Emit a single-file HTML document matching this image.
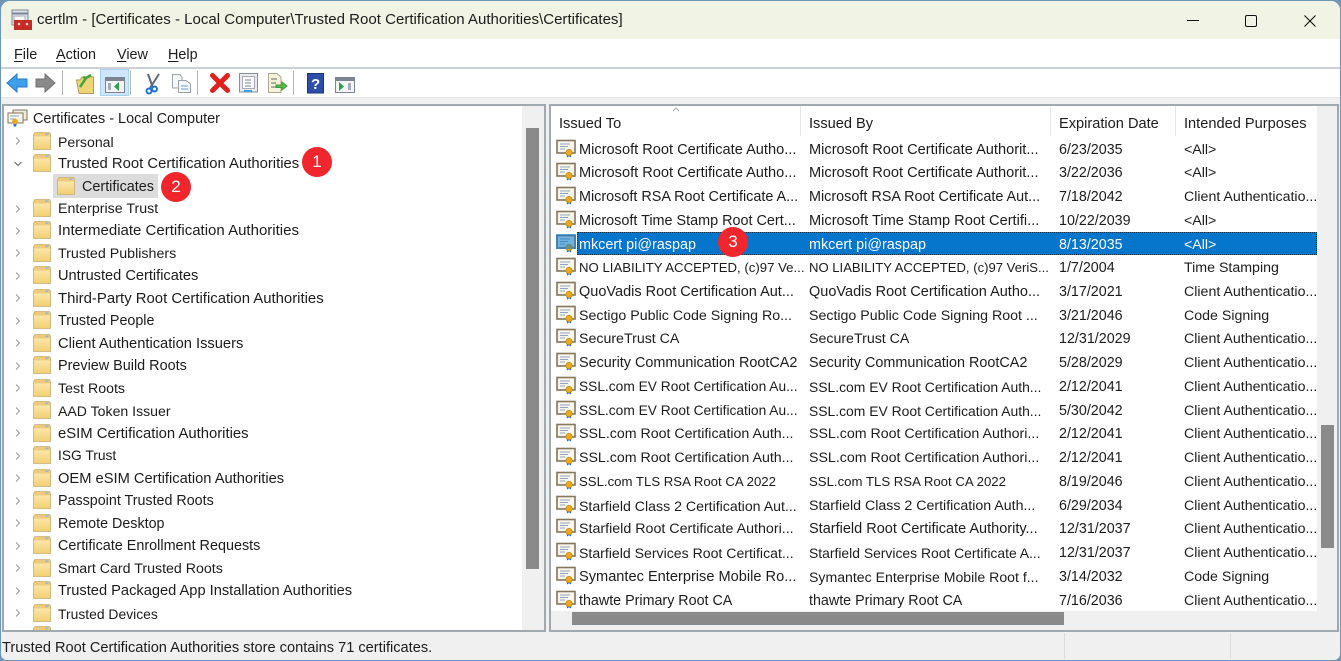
<!DOCTYPE html>
<html><head><meta charset="utf-8"><style>
html,body{margin:0;padding:0;width:1341px;height:661px;overflow:hidden;background:#6f96b8}
*{box-sizing:border-box}
#w{position:absolute;left:1px;top:1px;width:1339px;height:659px;background:#f0f0f0;border-radius:9px 9px 6px 6px;overflow:hidden;}
.a{position:absolute}
.x{position:absolute;white-space:nowrap;font:14.6px/20px "Liberation Sans",sans-serif;color:#1c1c1c}
.t{position:absolute;left:0;width:520px;height:22px}
.t .x{left:54px;top:1px}
.t svg.f{position:absolute;left:27.500px;top:0}
.t svg.c{position:absolute;left:9px;top:5.500px}
.r{position:absolute;left:0;width:768px;height:23px}
.r .x{top:1px}
.r svg{position:absolute;left:5px;top:0}
.r .x:nth-of-type(1){left:28px}.r .x:nth-of-type(2){left:258px}.r .x:nth-of-type(3){left:508px;font-size:14.3px}.r .x:nth-of-type(4){left:633px;font-size:14.2px;width:133px;overflow:hidden}
.b{position:absolute;border-radius:50%;background:#f0262c;color:#fff;font:17px/30px "Liberation Sans",sans-serif;text-align:center;width:30px;height:30px}
</style></head><body>
<svg width="0" height="0" style="position:absolute">
<defs><linearGradient id="fg" x1="0" y1="0" x2="0" y2="1"><stop offset="0" stop-color="#fbe7aa"/><stop offset="1" stop-color="#f2cf73"/></linearGradient></defs>
<symbol id="fo" viewBox="0 0 20 20"><path d="M1.500 3.500L3 1.500H17.500L18.500 3V18.500H1.500Z" fill="#eccb7c" stroke="#c9ae74" stroke-width=".8"/><path d="M2 5.500H18V18H2Z" fill="url(#fg)"/><path d="M13 2.500h3.500v1.500h-3.500z" fill="#8fbbe6"/></symbol>
<symbol id="ce" viewBox="0 0 20 20"><rect x="1" y="1.500" width="18" height="12.500" fill="#f8f5ea" stroke="#86765c" stroke-width="1.600"/><path d="M4 5h10M4 7.500h8M4 10h5" stroke="#8ea6c4" stroke-width="1"/><path d="M10.500 14.500l.5 4 2-1.300 2 1.300 .5-4z" fill="#2d6fc4"/><circle cx="13" cy="13.500" r="3.200" fill="#eba91c" stroke="#c08612" stroke-width=".7"/></symbol>
<symbol id="ch" viewBox="0 0 10 10"><path d="M3 1.500L6.500 5 3 8.500" fill="none" stroke="#9a9a9a" stroke-width="1"/></symbol>
</svg>
<div id="w">
<div class="a" style="left:0;top:0;width:1339px;height:38px;background:#f1f3e4"></div>
<svg class="a" style="left:10px;top:8px" width="22" height="22" viewBox="0 0 22 22"><rect x="1" y="1" width="16" height="15" fill="#dfe3ea" stroke="#7d8694"/><path d="M1 4.500H17" stroke="#7d8694" stroke-width="2"/><rect x="3" y="7" width="11" height="7" fill="#f7f7f7" stroke="#a8adb5"/><rect x="3" y="11" width="18" height="10" fill="#c62a25"/><circle cx="8" cy="15" r="1.300" fill="#f3d0c8"/><circle cx="16" cy="15" r="1.300" fill="#f3d0c8"/></svg>
<div class="x" style="left:36px;top:9px;font-size:15.05px">certlm - [Certificates - Local Computer\Trusted Root Certification Authorities\Certificates]</div>
<div class="a" style="left:1186px;top:19px;width:12px;height:1px;background:#111"></div>
<div class="a" style="left:1244px;top:14px;width:12px;height:12px;border:1.500px solid #111;border-radius:2px"></div>
<svg class="a" style="left:1302px;top:13px" width="14" height="14"><path d="M1.500 1.500L12.500 12.500M12.500 1.500L1.500 12.500" stroke="#111" stroke-width="1.100"/></svg>
<div class="a" style="left:0;top:38px;width:1339px;height:28px;background:#fff"></div>
<div class="x" style="left:13px;top:44px;font-size:14.4px"><u style="text-underline-offset:2px">F</u>ile</div>
<div class="x" style="left:55px;top:44px;font-size:14.4px"><u style="text-underline-offset:2px">A</u>ction</div>
<div class="x" style="left:116px;top:44px;font-size:14.4px"><u style="text-underline-offset:2px">V</u>iew</div>
<div class="x" style="left:167px;top:44px;font-size:14.4px"><u style="text-underline-offset:2px">H</u>elp</div>
<div class="a" style="left:0;top:66px;width:1339px;height:2px;background:#cdd0d6"></div>
<div class="a" style="left:0;top:68px;width:1339px;height:28px;background:#fff"></div>
<svg class="a" style="left:-1px;top:67px" width="400" height="29" viewBox="0 68 400 29">
<path d="M7 83L17 74V79H27V87H17V92Z" fill="#3f9fe8" stroke="#2878c4"/>
<path d="M55 83L45 74V79H36V87H45V92Z" fill="#8a8a8a" stroke="#707070"/>
<path d="M62.500 71V95M130.500 71V95M197.500 71V95M293.500 71V95" stroke="#b4b4b4"/>
<rect x="100.500" y="69.500" width="28" height="26" fill="#cde6fb" stroke="#a9d3f5"/>
<path d="M76.500 80H80L82 77H93.500V93.500H79Z" fill="#f0d478" stroke="#b59a5c"/><path d="M80 87L86 78M86 78L83 77M86 78L91 75" stroke="#3fa83c" stroke-width="2.500" fill="none"/>
<rect x="105.500" y="77.500" width="19" height="15" fill="#f2f4f6" stroke="#7b8490"/><path d="M105 79.500H125" stroke="#7b8490" stroke-width="3"/><path d="M108 83h3v7h-3z" fill="#a3adb8"/><path d="M119 82V91L114 86.500Z" fill="#2ea04a"/>
<path d="M159 74L150 88M148 74L153 88" stroke="#5c6a78" stroke-width="2"/><circle cx="149" cy="91" r="2.500" fill="none" stroke="#1f74d0" stroke-width="2"/><circle cx="154.500" cy="89" r="2.500" fill="none" stroke="#1f74d0" stroke-width="2"/>
<path d="M172.500 74.500H180L182 77V88H172.500Z" fill="#f7f8fa" stroke="#9aa3ae"/><path d="M178.500 80.500H186L190.500 84V92.500H178.500Z" fill="#f7f8fa" stroke="#9aa3ae"/><path d="M181 86h7M181 89h7" stroke="#6a9ed4"/>
<path d="M212.500 75.500L227.500 90.500M227.500 75.500L212.500 90.500" stroke="#e2211c" stroke-width="5" stroke-linecap="round"/>
<rect x="239.500" y="73.500" width="18" height="18.500" fill="#e8eaec" stroke="#858d96"/><rect x="242.500" y="76.500" width="12" height="12" fill="#fbfbfb" stroke="#aab"/><path d="M245 80h6M245 83h6M245 86h6" stroke="#7b8794"/><path d="M244 91h8" stroke="#39a0e8" stroke-width="2"/>
<path d="M268.500 73.500H277L281 77V92.500H268.500Z" fill="#f6f2dc" stroke="#aaa68c"/><path d="M271 79h6M271 83h5M271 87h5" stroke="#666"/><path d="M276 85H282V82L287 86L282 90V87.500H276Z" fill="#5cbd4b" stroke="#3c9a36"/>
<rect x="307.500" y="73.500" width="16" height="19.500" fill="#2d4ea8" stroke="#1d3378"/><text x="311" y="89" font-family="Liberation Sans" font-weight="bold" font-size="15" fill="#fff">?</text>
<rect x="335.500" y="77.500" width="19" height="15" fill="#f2f4f6" stroke="#7b8490"/><path d="M335 79.500H355" stroke="#7b8490" stroke-width="3"/><path d="M348 83h3v7h-3z" fill="#a3adb8"/><path d="M339 82V91L344 86.500Z" fill="#2ea04a"/>
</svg>
<div class="a" style="left:0;top:96px;width:1339px;height:1px;background:#e6e6e6"></div>

<div class="a" style="left:1px;top:103px;width:544px;height:528px;background:#fff;border:2px solid #a0a8b0;overflow:hidden">
<div class="a" style="left:518px;top:0;width:22px;height:524px;background:#f0f0f0"></div>
<div class="a" style="left:522px;top:22px;width:13px;height:441px;background:#8a8a8a"></div>
<div class="a" id="tree" style="left:0;top:0;width:518px;height:524px;overflow:hidden">
<svg class="a" style="left:3px;top:3px" width="21" height="19" viewBox="0 0 21 19"><rect x="6" y="1" width="14" height="10" fill="#f1ecd9" stroke="#807460"/><rect x="1" y="4" width="15" height="10" fill="#f7f4e8" stroke="#807460"/><path d="M3 7h9M3 10h6" stroke="#8ea6c4"/><path d="M6 14l1 4 1-1 1 1 1-4z" fill="#2d6fc4"/><circle cx="8" cy="12.500" r="2.800" fill="#e8a820"/></svg>
<div class="x" style="left:29px;top:3px;font-size:14.45px">Certificates - Local Computer</div>
<div class="t" style="top:24.500px"><svg class="c" width="10" height="10"><use href="#ch"/></svg><svg class="f" width="20" height="20"><use href="#fo"/></svg><div class="x" style="font-size:14.1px">Personal</div></div>
<div class="t" style="top:47px"><svg class="c" width="10" height="10"><path d="M1.500 3L5 6.500 8.500 3" fill="none" stroke="#666"/></svg><svg class="f" width="20" height="20"><use href="#fo"/></svg><div class="x" style="font-size:14.85px">Trusted Root Certification Authorities</div></div>
<div class="a" style="left:49px;top:68px;width:105px;height:24px;background:#dcdcdc"></div>
<div class="t" style="top:69.500px"><svg class="f" style="left:51.500px" width="20" height="20"><use href="#fo"/></svg><div class="x" style="left:78px;font-size:14.4px">Certificates</div></div>
<div class="t" style="top:92px"><svg class="c" width="10" height="10"><use href="#ch"/></svg><svg class="f" width="20" height="20"><use href="#fo"/></svg><div class="x" style="font-size:14.2px">Enterprise Trust</div></div>
<div class="t" style="top:114.400px"><svg class="c" width="10" height="10"><use href="#ch"/></svg><svg class="f" width="20" height="20"><use href="#fo"/></svg><div class="x" style="font-size:15px">Intermediate Certification Authorities</div></div>
<div class="t" style="top:136.900px"><svg class="c" width="10" height="10"><use href="#ch"/></svg><svg class="f" width="20" height="20"><use href="#fo"/></svg><div class="x" style="font-size:14.25px">Trusted Publishers</div></div>
<div class="t" style="top:159.400px"><svg class="c" width="10" height="10"><use href="#ch"/></svg><svg class="f" width="20" height="20"><use href="#fo"/></svg><div class="x">Untrusted Certificates</div></div>
<div class="t" style="top:181.900px"><svg class="c" width="10" height="10"><use href="#ch"/></svg><svg class="f" width="20" height="20"><use href="#fo"/></svg><div class="x" style="font-size:14.9px">Third-Party Root Certification Authorities</div></div>
<div class="t" style="top:204.300px"><svg class="c" width="10" height="10"><use href="#ch"/></svg><svg class="f" width="20" height="20"><use href="#fo"/></svg><div class="x" style="font-size:14.3px">Trusted People</div></div>
<div class="t" style="top:226.800px"><svg class="c" width="10" height="10"><use href="#ch"/></svg><svg class="f" width="20" height="20"><use href="#fo"/></svg><div class="x" style="font-size:14.7px">Client Authentication Issuers</div></div>
<div class="t" style="top:249.300px"><svg class="c" width="10" height="10"><use href="#ch"/></svg><svg class="f" width="20" height="20"><use href="#fo"/></svg><div class="x" style="font-size:14.4px">Preview Build Roots</div></div>
<div class="t" style="top:271.700px"><svg class="c" width="10" height="10"><use href="#ch"/></svg><svg class="f" width="20" height="20"><use href="#fo"/></svg><div class="x" style="font-size:14.2px">Test Roots</div></div>
<div class="t" style="top:294.200px"><svg class="c" width="10" height="10"><use href="#ch"/></svg><svg class="f" width="20" height="20"><use href="#fo"/></svg><div class="x" style="font-size:14.1px">AAD Token Issuer</div></div>
<div class="t" style="top:316.700px"><svg class="c" width="10" height="10"><use href="#ch"/></svg><svg class="f" width="20" height="20"><use href="#fo"/></svg><div class="x" style="font-size:14.85px">eSIM Certification Authorities</div></div>
<div class="t" style="top:339.200px"><svg class="c" width="10" height="10"><use href="#ch"/></svg><svg class="f" width="20" height="20"><use href="#fo"/></svg><div class="x" style="font-size:13.8px">ISG Trust</div></div>
<div class="t" style="top:361.600px"><svg class="c" width="10" height="10"><use href="#ch"/></svg><svg class="f" width="20" height="20"><use href="#fo"/></svg><div class="x" style="font-size:14.7px">OEM eSIM Certification Authorities</div></div>
<div class="t" style="top:384.100px"><svg class="c" width="10" height="10"><use href="#ch"/></svg><svg class="f" width="20" height="20"><use href="#fo"/></svg><div class="x" style="font-size:14.3px">Passpoint Trusted Roots</div></div>
<div class="t" style="top:406.600px"><svg class="c" width="10" height="10"><use href="#ch"/></svg><svg class="f" width="20" height="20"><use href="#fo"/></svg><div class="x" style="font-size:14.3px">Remote Desktop</div></div>
<div class="t" style="top:429px"><svg class="c" width="10" height="10"><use href="#ch"/></svg><svg class="f" width="20" height="20"><use href="#fo"/></svg><div class="x" style="font-size:14.4px">Certificate Enrollment Requests</div></div>
<div class="t" style="top:451.500px"><svg class="c" width="10" height="10"><use href="#ch"/></svg><svg class="f" width="20" height="20"><use href="#fo"/></svg><div class="x" style="font-size:14.2px">Smart Card Trusted Roots</div></div>
<div class="t" style="top:474px"><svg class="c" width="10" height="10"><use href="#ch"/></svg><svg class="f" width="20" height="20"><use href="#fo"/></svg><div class="x" style="font-size:14.65px">Trusted Packaged App Installation Authorities</div></div>
<div class="t" style="top:496.500px"><svg class="c" width="10" height="10"><use href="#ch"/></svg><svg class="f" width="20" height="20"><use href="#fo"/></svg><div class="x" style="font-size:13.9px">Trusted Devices</div></div>
<div class="t" style="top:519px"><svg class="f" width="20" height="20"><use href="#fo"/></svg></div>
</div>
</div>

<div class="a" style="left:548px;top:103px;width:790px;height:528px;background:#fff;border:2px solid #a0a8b0;overflow:hidden">
<div class="x" style="left:8px;top:8px">Issued To</div>
<div class="x" style="left:258px;top:8px">Issued By</div>
<div class="x" style="left:508px;top:8px">Expiration Date</div>
<div class="x" style="left:633px;top:8px">Intended Purposes</div>
<div class="a" style="left:249px;top:0;width:1px;height:30px;background:#e5e5e5"></div>
<div class="a" style="left:499px;top:0;width:1px;height:30px;background:#e5e5e5"></div>
<div class="a" style="left:624px;top:0;width:1px;height:30px;background:#e5e5e5"></div>
<svg class="a" style="left:121px;top:1px" width="8" height="5"><path d="M1 4L4 1 7 4" fill="none" stroke="#aaa"/></svg>
<div class="a" style="left:766px;top:0;width:20px;height:524px;background:#f0f0f0"></div>
<div class="a" style="left:770px;top:319px;width:13px;height:123px;background:#8a8a8a"></div>
<div class="a" style="left:0;top:505px;width:786px;height:19px;background:#f0f0f0"></div>
<div class="a" style="left:21px;top:506px;width:492px;height:13px;background:#8a8a8a"></div>
<div class="a" style="left:26px;top:126px;width:740px;height:23px;background:#0675cc;border:1px dotted #17364f"></div>
<div class="a" id="list" style="left:0;top:0;width:766px;height:505px;overflow:hidden">
<div class="r" style="top:32.500px"><svg width="20" height="20"><use href="#ce"/></svg><div class="x">Microsoft Root Certificate Autho...</div><div class="x">Microsoft Root Certificate Authorit...</div><div class="x">6/23/2035</div><div class="x">&lt;All&gt;</div></div>
<div class="r" style="top:56.200px"><svg width="20" height="20"><use href="#ce"/></svg><div class="x">Microsoft Root Certificate Autho...</div><div class="x">Microsoft Root Certificate Authorit...</div><div class="x">3/22/2036</div><div class="x">&lt;All&gt;</div></div>
<div class="r" style="top:80px"><svg width="20" height="20"><use href="#ce"/></svg><div class="x" style="font-size:14.4px">Microsoft RSA Root Certificate A...</div><div class="x" style="font-size:14.4px">Microsoft RSA Root Certificate Aut...</div><div class="x">7/18/2042</div><div class="x">Client Authenticatio...</div></div>
<div class="r" style="top:103.700px"><svg width="20" height="20"><use href="#ce"/></svg><div class="x" style="font-size:14.4px">Microsoft Time Stamp Root Cert...</div><div class="x">Microsoft Time Stamp Root Certifi...</div><div class="x">10/22/2039</div><div class="x">&lt;All&gt;</div></div>
<div class="r" style="top:127.500px"><svg width="20" height="20"><use href="#ce"/><rect x="0" y="0" width="20" height="15" fill="#0078d4" opacity=".55"/></svg><div class="x" style="color:#fff;font-size:14.4px">mkcert pi@raspap</div><div class="x" style="color:#fff;font-size:14.4px">mkcert pi@raspap</div><div class="x" style="color:#fff">8/13/2035</div><div class="x" style="color:#fff">&lt;All&gt;</div></div>
<div class="r" style="top:151.200px"><svg width="20" height="20"><use href="#ce"/></svg><div class="x" style="font-size:13.2px">NO LIABILITY ACCEPTED, (c)97 Ve...</div><div class="x" style="font-size:13.1px">NO LIABILITY ACCEPTED, (c)97 VeriS...</div><div class="x">1/7/2004</div><div class="x">Time Stamping</div></div>
<div class="r" style="top:175px"><svg width="20" height="20"><use href="#ce"/></svg><div class="x" style="font-size:14.5px">QuoVadis Root Certification Aut...</div><div class="x" style="font-size:14.5px">QuoVadis Root Certification Autho...</div><div class="x">3/17/2021</div><div class="x">Client Authenticatio...</div></div>
<div class="r" style="top:198.700px"><svg width="20" height="20"><use href="#ce"/></svg><div class="x" style="font-size:14.2px">Sectigo Public Code Signing Ro...</div><div class="x" style="font-size:14.2px">Sectigo Public Code Signing Root ...</div><div class="x">3/21/2046</div><div class="x">Code Signing</div></div>
<div class="r" style="top:222.400px"><svg width="20" height="20"><use href="#ce"/></svg><div class="x" style="font-size:14.2px">SecureTrust CA</div><div class="x" style="font-size:14.2px">SecureTrust CA</div><div class="x">12/31/2029</div><div class="x">Client Authenticatio...</div></div>
<div class="r" style="top:246.200px"><svg width="20" height="20"><use href="#ce"/></svg><div class="x" style="font-size:14.4px">Security Communication RootCA2</div><div class="x" style="font-size:14.4px">Security Communication RootCA2</div><div class="x">5/28/2029</div><div class="x">Client Authenticatio...</div></div>
<div class="r" style="top:269.900px"><svg width="20" height="20"><use href="#ce"/></svg><div class="x" style="font-size:13.75px">SSL.com EV Root Certification Au...</div><div class="x" style="font-size:13.9px">SSL.com EV Root Certification Auth...</div><div class="x">2/12/2041</div><div class="x">Client Authenticatio...</div></div>
<div class="r" style="top:293.600px"><svg width="20" height="20"><use href="#ce"/></svg><div class="x" style="font-size:13.75px">SSL.com EV Root Certification Au...</div><div class="x" style="font-size:13.9px">SSL.com EV Root Certification Auth...</div><div class="x">5/30/2042</div><div class="x">Client Authenticatio...</div></div>
<div class="r" style="top:317.400px"><svg width="20" height="20"><use href="#ce"/></svg><div class="x" style="font-size:14.2px">SSL.com Root Certification Auth...</div><div class="x" style="font-size:14.2px">SSL.com Root Certification Authori...</div><div class="x">2/12/2041</div><div class="x">Client Authenticatio...</div></div>
<div class="r" style="top:341.100px"><svg width="20" height="20"><use href="#ce"/></svg><div class="x" style="font-size:14.2px">SSL.com Root Certification Auth...</div><div class="x" style="font-size:14.2px">SSL.com Root Certification Authori...</div><div class="x">2/12/2041</div><div class="x">Client Authenticatio...</div></div>
<div class="r" style="top:364.900px"><svg width="20" height="20"><use href="#ce"/></svg><div class="x" style="font-size:13.2px">SSL.com TLS RSA Root CA 2022</div><div class="x" style="font-size:13.2px">SSL.com TLS RSA Root CA 2022</div><div class="x">8/19/2046</div><div class="x">Client Authenticatio...</div></div>
<div class="r" style="top:388.600px"><svg width="20" height="20"><use href="#ce"/></svg><div class="x" style="font-size:14.15px">Starfield Class 2 Certification Aut...</div><div class="x" style="font-size:14.2px">Starfield Class 2 Certification Auth...</div><div class="x">6/29/2034</div><div class="x">Client Authenticatio...</div></div>
<div class="r" style="top:412.400px"><svg width="20" height="20"><use href="#ce"/></svg><div class="x" style="font-size:14.25px">Starfield Root Certificate Authori...</div><div class="x" style="font-size:14.5px">Starfield Root Certificate Authority...</div><div class="x">12/31/2037</div><div class="x">Client Authenticatio...</div></div>
<div class="r" style="top:436.100px"><svg width="20" height="20"><use href="#ce"/></svg><div class="x" style="font-size:14.1px">Starfield Services Root Certificat...</div><div class="x" style="font-size:13.9px">Starfield Services Root Certificate A...</div><div class="x">12/31/2037</div><div class="x">Client Authenticatio...</div></div>
<div class="r" style="top:459.900px"><svg width="20" height="20"><use href="#ce"/></svg><div class="x">Symantec Enterprise Mobile Ro...</div><div class="x" style="font-size:14.1px">Symantec Enterprise Mobile Root f...</div><div class="x">3/14/2032</div><div class="x">Code Signing</div></div>
<div class="r" style="top:483.600px"><svg width="20" height="20"><use href="#ce"/></svg><div class="x" style="font-size:14.3px">thawte Primary Root CA</div><div class="x" style="font-size:14.3px">thawte Primary Root CA</div><div class="x">7/16/2036</div><div class="x">Client Authenticatio...</div></div>
</div>
</div>

<div class="x" style="left:1px;top:637px;font-size:14.6px">Trusted Root Certification Authorities store contains 71 certificates.</div>
<div class="a" style="left:1063px;top:632px;width:1px;height:26px;background:#dcdcdc"></div>
<div class="a" style="left:1229px;top:632px;width:1px;height:26px;background:#dcdcdc"></div>
<div class="b" style="left:301px;top:146px">1</div>
<div class="b" style="left:160px;top:171px">2</div>
<div class="b" style="left:717px;top:226px">3</div>
</div>
</body></html>
